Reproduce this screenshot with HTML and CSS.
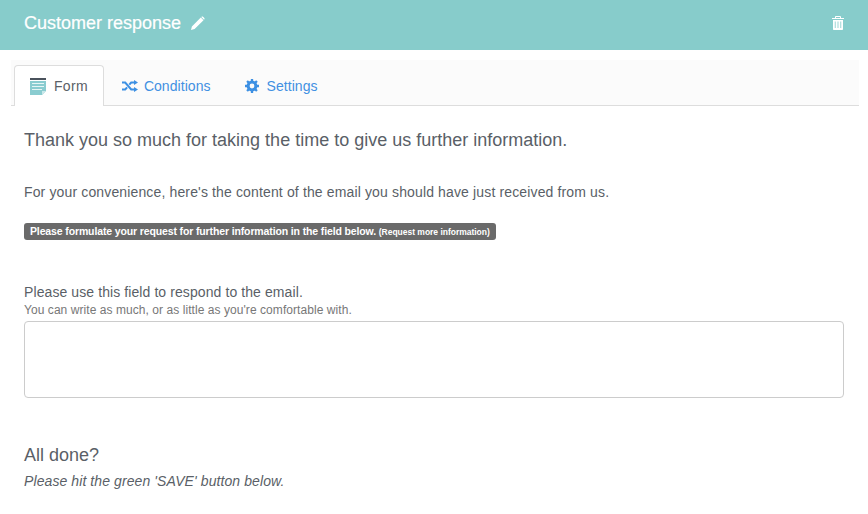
FILE: index.html
```
<!DOCTYPE html>
<html lang="en">
<head>
<meta charset="utf-8">
<title>Customer response</title>
<link rel="stylesheet" href="styles.css">
</head>
<body>
<header class="topbar">
  <h1 class="topbar-title">Customer response</h1>
  <svg class="pencil" viewBox="0 0 14 14" width="14" height="14"><path d="M0 14l.9-3.600L9.800 1.500l2.700 2.700-8.900 8.900L0 14zM10.600.7c.4-.4 1-.4 1.400 0l1.300 1.300c.4.4.4 1 0 1.400l-.3.300-2.700-2.700.3-.300z" fill="#fff"/></svg>
  <svg class="trash" viewBox="0 0 12 14" width="12" height="14"><path d="M4 0h4c.5 0 1 .5 1 1v1h3v1H0V2h3V1c0-.5.5-1 1-1zm0 1v1h4V1H4zM1 4h10v9c0 .6-.4 1-1 1H2c-.6 0-1-.4-1-1V4zm1.800 1.500v6.500h.8V5.500h-.8zm2.800 0v6.500h.8V5.500h-.8zm2.800 0v6.500h.8V5.500h-.8z" fill="#fff"/></svg>
</header>
<nav class="tabs">
  <a class="tab tab-active">
    <svg class="tab-icon" viewBox="0 0 16 17" width="16" height="17"><rect width="16" height="2" fill="#4a525c"/><path d="M0 3h16v10l-4 4H0z" fill="#8accd0"/><path d="M2 5.500h12M2 8.500h12M2 11.500h10" stroke="#e6f5f5" stroke-width="1.200"/><path d="M12 13h4l-4 4z" fill="#c9e8ea"/></svg>
    Form
  </a>
  <a class="tab tab-conditions">
    <svg class="tab-icon" viewBox="0 0 16 12" width="16" height="12"><path d="M0 2.500h3.200l6 7H12M0 9.500h3.200l1.900-2.200M7.300 4.700l1.900-2.200H12" fill="none" stroke="#3d90e3" stroke-width="2"/><path d="M12 0l4 2.500-4 2.500zM12 7l4 2.500-4 2.500z" fill="#3d90e3"/></svg>
    Conditions
  </a>
  <a class="tab">
    <svg class="tab-icon" viewBox="0 0 14 14" width="14" height="14"><circle cx="7" cy="7" r="3.900" fill="none" stroke="#3d90e3" stroke-width="3"/><path d="M7 0v14M0 7h14M2.050 2.050l9.900 9.900M11.950 2.050l-9.900 9.900" stroke="#3d90e3" stroke-width="2.300" stroke-dasharray="2.600 8.800 2.600"/></svg>
    Settings
  </a>
</nav>
<main class="content">
  <h2 class="lead">Thank you so much for taking the time to give us further information.</h2>
  <p class="intro">For your convenience, here's the content of the email you should have just received from us.</p>
  <div class="label-row"><span class="badge">Please formulate your request for further information in the field below. <small class="badge-small">(Request more information)</small></span></div>
  <label class="field-label" for="resp">Please use this field to respond to the email.</label>
  <div class="field-help">You can write as much, or as little as you're comfortable with.</div>
  <textarea class="field" id="resp"></textarea>
  <h3 class="done">All done?</h3>
  <p class="hint">Please hit the green 'SAVE' button below.</p>
</main>
</body>
</html>
```
FILE: styles.css
```
* { box-sizing: border-box; }
html, body { margin: 0; height: 100%; overflow: hidden; }
body {
  background: #fff;
  color: #5a5f67;
  font-family: "Liberation Sans", Arial, sans-serif;
  font-size: 14px;
}
.topbar {
  height: 50px;
  background: #87cccb;
  display: flex;
  align-items: center;
  padding: 0 24px 4px;
  color: #fff;
}
.topbar-title {
  margin: 0;
  font-size: 18px;
  font-weight: 400;
  -webkit-text-stroke: 0.2px #fff;
}
.pencil { margin-left: 10px; }
.trash { margin-left: auto; margin-right: 0; }
.tabs {
  display: flex;
  gap: 2px;
  margin: 10px 9px 0 11px;
  height: 46px;
  padding-left: 3px;
  background: #fbfbfb;
  border-bottom: 1px solid #dddddd;
}
.tab {
  display: flex;
  align-items: center;
  gap: 8px;
  height: 41px;
  margin-top: 5px;
  padding: 0 15px;
  color: #4190e2;
  border: 1px solid transparent;
  border-bottom: 0;
  letter-spacing: 0.05px;
}
.tab-conditions { gap: 6px; }
.tab-active {
  height: 41px;
  background: #fff;
  color: #5a5f67;
  border-color: #dddddd;
  border-radius: 4px 4px 0 0;
  margin-bottom: -1px;
  letter-spacing: 0.3px;
}
.content { padding: 0 24px; }
.lead {
  margin: 23px 0 0;
  font-size: 18px;
  line-height: 22px;
  font-weight: 400;
}
.intro {
  margin: 31px 0 0;
  line-height: 20px;
  letter-spacing: 0.14px;
}
.label-row { margin-top: 21px; height: 17px; display: flex; }
.badge {
  display: inline-block;
  height: 17px;
  padding: 0 6px;
  background: #6a6a6a;
  color: #fff;
  border-radius: 3px;
  font-size: 10.500px;
  font-weight: 700;
  line-height: 16px;
  white-space: nowrap;
  letter-spacing: -0.13px;
}
.badge-small { font-size: 8.500px; letter-spacing: -0.02px; }
.field-label {
  display: block;
  margin-top: 42px;
  line-height: 20px;
  letter-spacing: 0.09px;
}
.field-help {
  margin-top: 1px;
  font-size: 12px;
  line-height: 14px;
  color: #777;
  letter-spacing: 0.06px;
}
.field {
  display: block;
  width: 100%;
  height: 77px;
  margin-top: 4px;
  border: 1px solid #ccc;
  border-radius: 4px;
  resize: none;
  background: #fff;
}
.done {
  margin: 46px 0 0;
  font-size: 18px;
  line-height: 22px;
  font-weight: 400;
}
.hint {
  margin: 5px 0 0;
  font-style: italic;
  line-height: 20px;
  letter-spacing: 0.09px;
}
```
